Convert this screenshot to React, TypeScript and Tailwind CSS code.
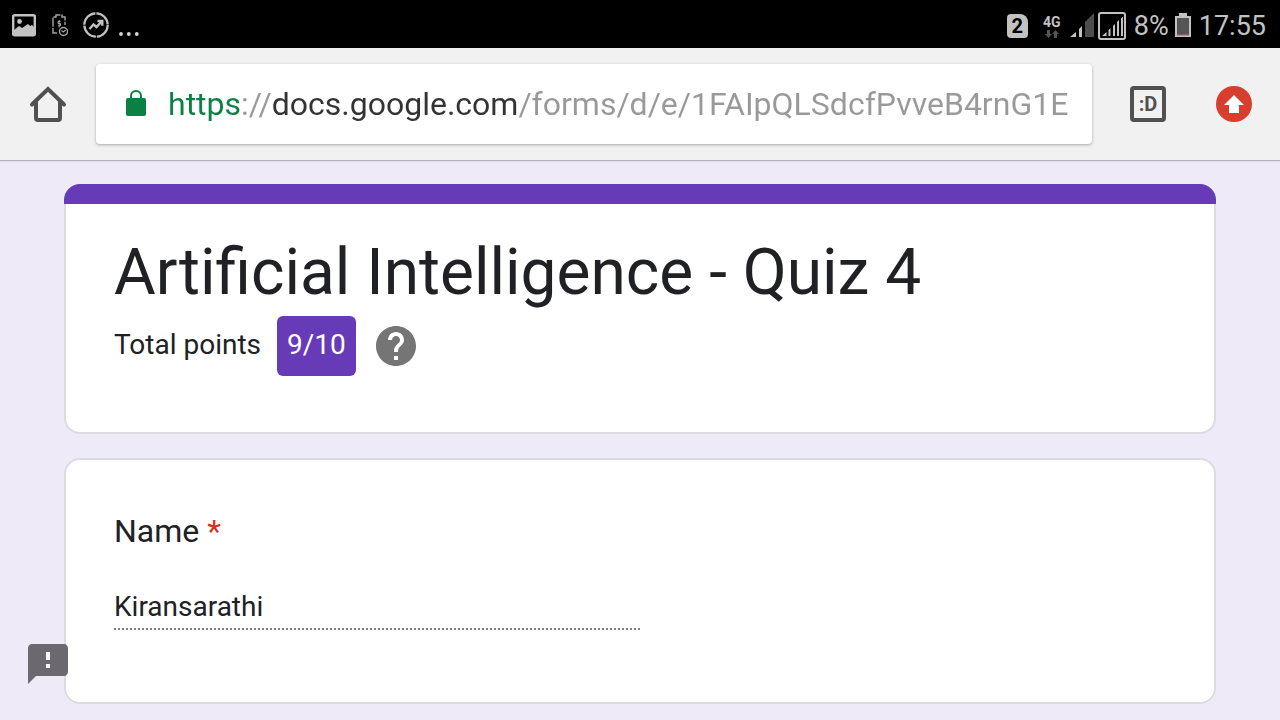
import type { ReactNode } from "react";

function StatusBar() {
  return (
    <div className="flex h-12 items-center justify-between bg-black pl-3 pr-3.5 text-[#c2c2c2]">
      <div className="flex items-center pt-0.5">
        <svg className="h-6 w-6" viewBox="0 0 24 24" aria-hidden="true">
          <rect x="1.2" y="2.2" width="21.6" height="20" rx="1.5" fill="none" stroke="currentColor" strokeWidth="2.4" />
          <circle cx="7.5" cy="8.5" r="2.4" fill="currentColor" />
          <path d="M2 17l5-4 3 2 6-4 2 2 2-1 2 2v8H2z" fill="currentColor" />
        </svg>
        <svg className="ml-4 h-6 w-4" viewBox="0 0 16 24" fill="none" stroke="#a3a3a3" strokeWidth="1.4" aria-hidden="true">
          <path d="M5 20H1V4h3V2h6v2h3v8" strokeDasharray="9 1.2" />
          <path d="M8.5 8.500H6v2h2.500v2.300H6M7.200 7v7.500" strokeWidth="1" />
          <circle cx="11.500" cy="18.500" r="4" />
          <path d="M9.500 17.500l1.800 1.500 2.400-2" strokeWidth="1.100" />
        </svg>
        <svg className="ml-3.5 h-7 w-7" viewBox="0 0 28 28" fill="none" stroke="currentColor" aria-hidden="true">
          <circle cx="14" cy="14" r="11.700" strokeWidth="2.200" strokeDasharray="17.400 1" />
          <path d="M7.500 18l4-4.500 3 2.500 5-5.500M15.500 10h4.800v4.700" strokeWidth="2.400" />
        </svg>
        <svg className="ml-2 mt-4 h-4 w-6" viewBox="0 0 24 16" fill="#d4d4d4" aria-hidden="true">
          <circle cx="3" cy="9" r="1.900" />
          <circle cx="10.800" cy="9" r="1.900" />
          <circle cx="18.800" cy="9" r="1.900" />
        </svg>
      </div>

      <div className="flex items-center pt-1">
        <div className="flex h-6 w-[21px] items-center justify-center rounded-sm rounded-tr-lg bg-[#c2c2c2] text-xl/6 font-bold text-black">
          2
        </div>
        <div className="ml-3.5 flex w-5 flex-col items-center">
          <span className="text-sm/4 font-bold">4G</span>
          <svg className="h-2 w-4" viewBox="0 0 16 8" fill="#555" aria-hidden="true">
            <path d="M3 0h3v4h2L4.500 8 1 4h2zM10 8h3V4h2l-3.500-4L8 4h2z" />
          </svg>
        </div>
        <svg className="ml-2 h-7 w-6" viewBox="0 0 24 28" aria-hidden="true">
          <path d="M0 25l6-5v5zM9 17l3-3v11H9z" fill="#c2c2c2" />
          <path d="M15 10l9-9v24h-9z" fill="#4d4d4d" />
        </svg>
        <svg className="ml-1 h-7 w-7" viewBox="0 0 28 28" aria-hidden="true">
          <rect x="1" y="1" width="26" height="26" rx="2" fill="none" stroke="currentColor" strokeWidth="2" />
          <path d="M4 24l4.500-4v4zM10.500 18l2-2v8h-2zM15 14l2-2v12h-2zM19 10l2-2v16h-2zM23 6.500l2-2V24h-2z" fill="currentColor" />
        </svg>
        <span className="ml-2 text-[27px]/8">8%</span>
        <svg className="ml-1.5 h-7 w-4" viewBox="0 0 16 28" aria-hidden="true">
          <path d="M4 1h8v3h4v21H0V4h4z" fill="#c2c2c2" />
          <path d="M2 6h12v16H2z" fill="#555" />
          <path d="M2 22h12v1.500H2z" fill="#9b5a50" />
        </svg>
        <span className="ml-2 text-[27px]/8">17:55</span>
      </div>
    </div>
  );
}

function BrowserBar() {
  return (
    <header className="relative flex h-28 items-center bg-[#f1f1f1] pl-7 pr-[26px] shadow-[0_1px_1px_#b0adbd]">
      <button type="button" aria-label="Home" className="shrink-0">
        <svg className="h-10 w-10" viewBox="0 0 40 40" fill="none" stroke="#505050" strokeWidth="4" strokeLinecap="round" aria-hidden="true">
          <path d="M4 20.500L20 5l16 15.500" strokeLinejoin="miter" />
          <path d="M8 18.500V34q0 2 2 2h20q2 0 2-2V18.500" />
        </svg>
      </button>

      <div className="ml-7 flex h-20 min-w-0 flex-1 items-center rounded bg-white pl-7 pr-4 shadow-[0_1px_3px_rgba(0,0,0,0.3)]">
        <svg className="h-8 w-6 shrink-0" viewBox="0 0 24 32" aria-hidden="true">
          <rect x="2" y="10" width="20" height="18" rx="2" fill="#0b8043" />
          <path d="M7 11V8a5 5 0 0 1 10 0v3" fill="none" stroke="#0b8043" strokeWidth="2" />
        </svg>
        <input
          type="text"
          aria-label="Address"
          readOnly
          value="https://docs.google.com/forms/d/e/1FAIpQLSdcfPvveB4rnG1E"
          className="ml-5 h-12 min-w-0 flex-1 bg-[linear-gradient(to_right,#0b8043_73px,#999_73px,#999_103px,#333_103px,#333_350px,#999_350px)] bg-clip-text text-[32px] text-transparent outline-none"
        />
      </div>

      <button
        type="button"
        aria-label="Open tabs"
        className="ml-[38px] h-9 w-9 shrink-0 rounded border-4 border-[#505050] text-xl/7 font-bold text-[#505050]"
      >
        :D
      </button>
      <button type="button" aria-label="Update available" className="ml-12 shrink-0">
        <svg className="h-10 w-10" viewBox="0 0 40 40" aria-hidden="true">
          <circle cx="20" cy="20" r="18" fill="#d73e2d" />
          <path d="M20 11L30 21h-5v8H15v-8h-5z" fill="#fff" />
        </svg>
      </button>
    </header>
  );
}

function Card({ children }: { children: ReactNode }) {
  return (
    <section className="rounded-2xl border-2 border-[#dadce0] bg-white px-12">{children}</section>
  );
}

export default function App() {
  return (
    <div className="min-h-screen bg-[#eeeaf8] font-[Roboto,sans-serif] text-[#202124]">
      <StatusBar />
      <BrowserBar />

      <main className="flex flex-col gap-6 px-16 pb-4 pt-6">
        <div>
          <div className="h-5 rounded-t-2xl bg-[#673ab7]" />
          <section className="rounded-b-2xl border-2 border-t-0 border-[#dadce0] bg-white px-12 pb-14 pt-7">
            <h1 className="text-[64px]/[82px]">Artificial Intelligence - Quiz 4</h1>
            <div className="mt-0.5 flex items-center text-[28px]/[58px]">
              <span className="pb-0.5">Total points</span>
              <span className="ml-4 rounded-md bg-[#673ab7] px-2.5 pb-0.5 text-white">9/10</span>
              <button type="button" aria-label="About points" className="ml-5">
                <svg className="h-10 w-10" viewBox="2 2 20 20" fill="#757575" aria-hidden="true">
                  <path d="M12 2C6.480 2 2 6.480 2 12s4.480 10 10 10 10-4.480 10-10S17.520 2 12 2zm1 17h-2v-2h2v2zm2.070-7.750l-.9.920C13.450 12.900 13 13.500 13 15h-2v-.5c0-1.100.45-2.100 1.170-2.830l1.240-1.260c.37-.36.59-.86.59-1.410 0-1.100-.9-2-2-2s-2 .9-2 2H8c0-2.210 1.790-4 4-4s4 1.790 4 4c0 .88-.36 1.680-.93 2.250z" />
                </svg>
              </button>
            </div>
          </section>
        </div>

        <Card>
          <div className="pb-[72px] pt-12">
            <label htmlFor="name" className="block text-[32px]/[46px]">
              Name <span className="text-[#d93025]">*</span>
            </label>
            <input
              id="name"
              type="text"
              readOnly
              value="Kiransarathi"
              className="mt-[30px] block h-[46px] w-1/2 border-b-2 border-dotted border-[#808080] text-[28px] outline-none"
            />
          </div>
        </Card>
      </main>

      <button type="button" aria-label="Report a problem" className="fixed bottom-9 left-7">
        <svg className="h-10 w-10" viewBox="2 2 20 20" aria-hidden="true">
          <path d="M20 2H4c-1.100 0-2 .9-2 2v18l4-4h14c1.100 0 2-.9 2-2V4c0-1.100-.9-2-2-2z" fill="#6c6870" />
          <path d="M11 6h2v4h-2zM11 12h2v2h-2z" fill="#fff" />
        </svg>
      </button>
    </div>
  );
}
